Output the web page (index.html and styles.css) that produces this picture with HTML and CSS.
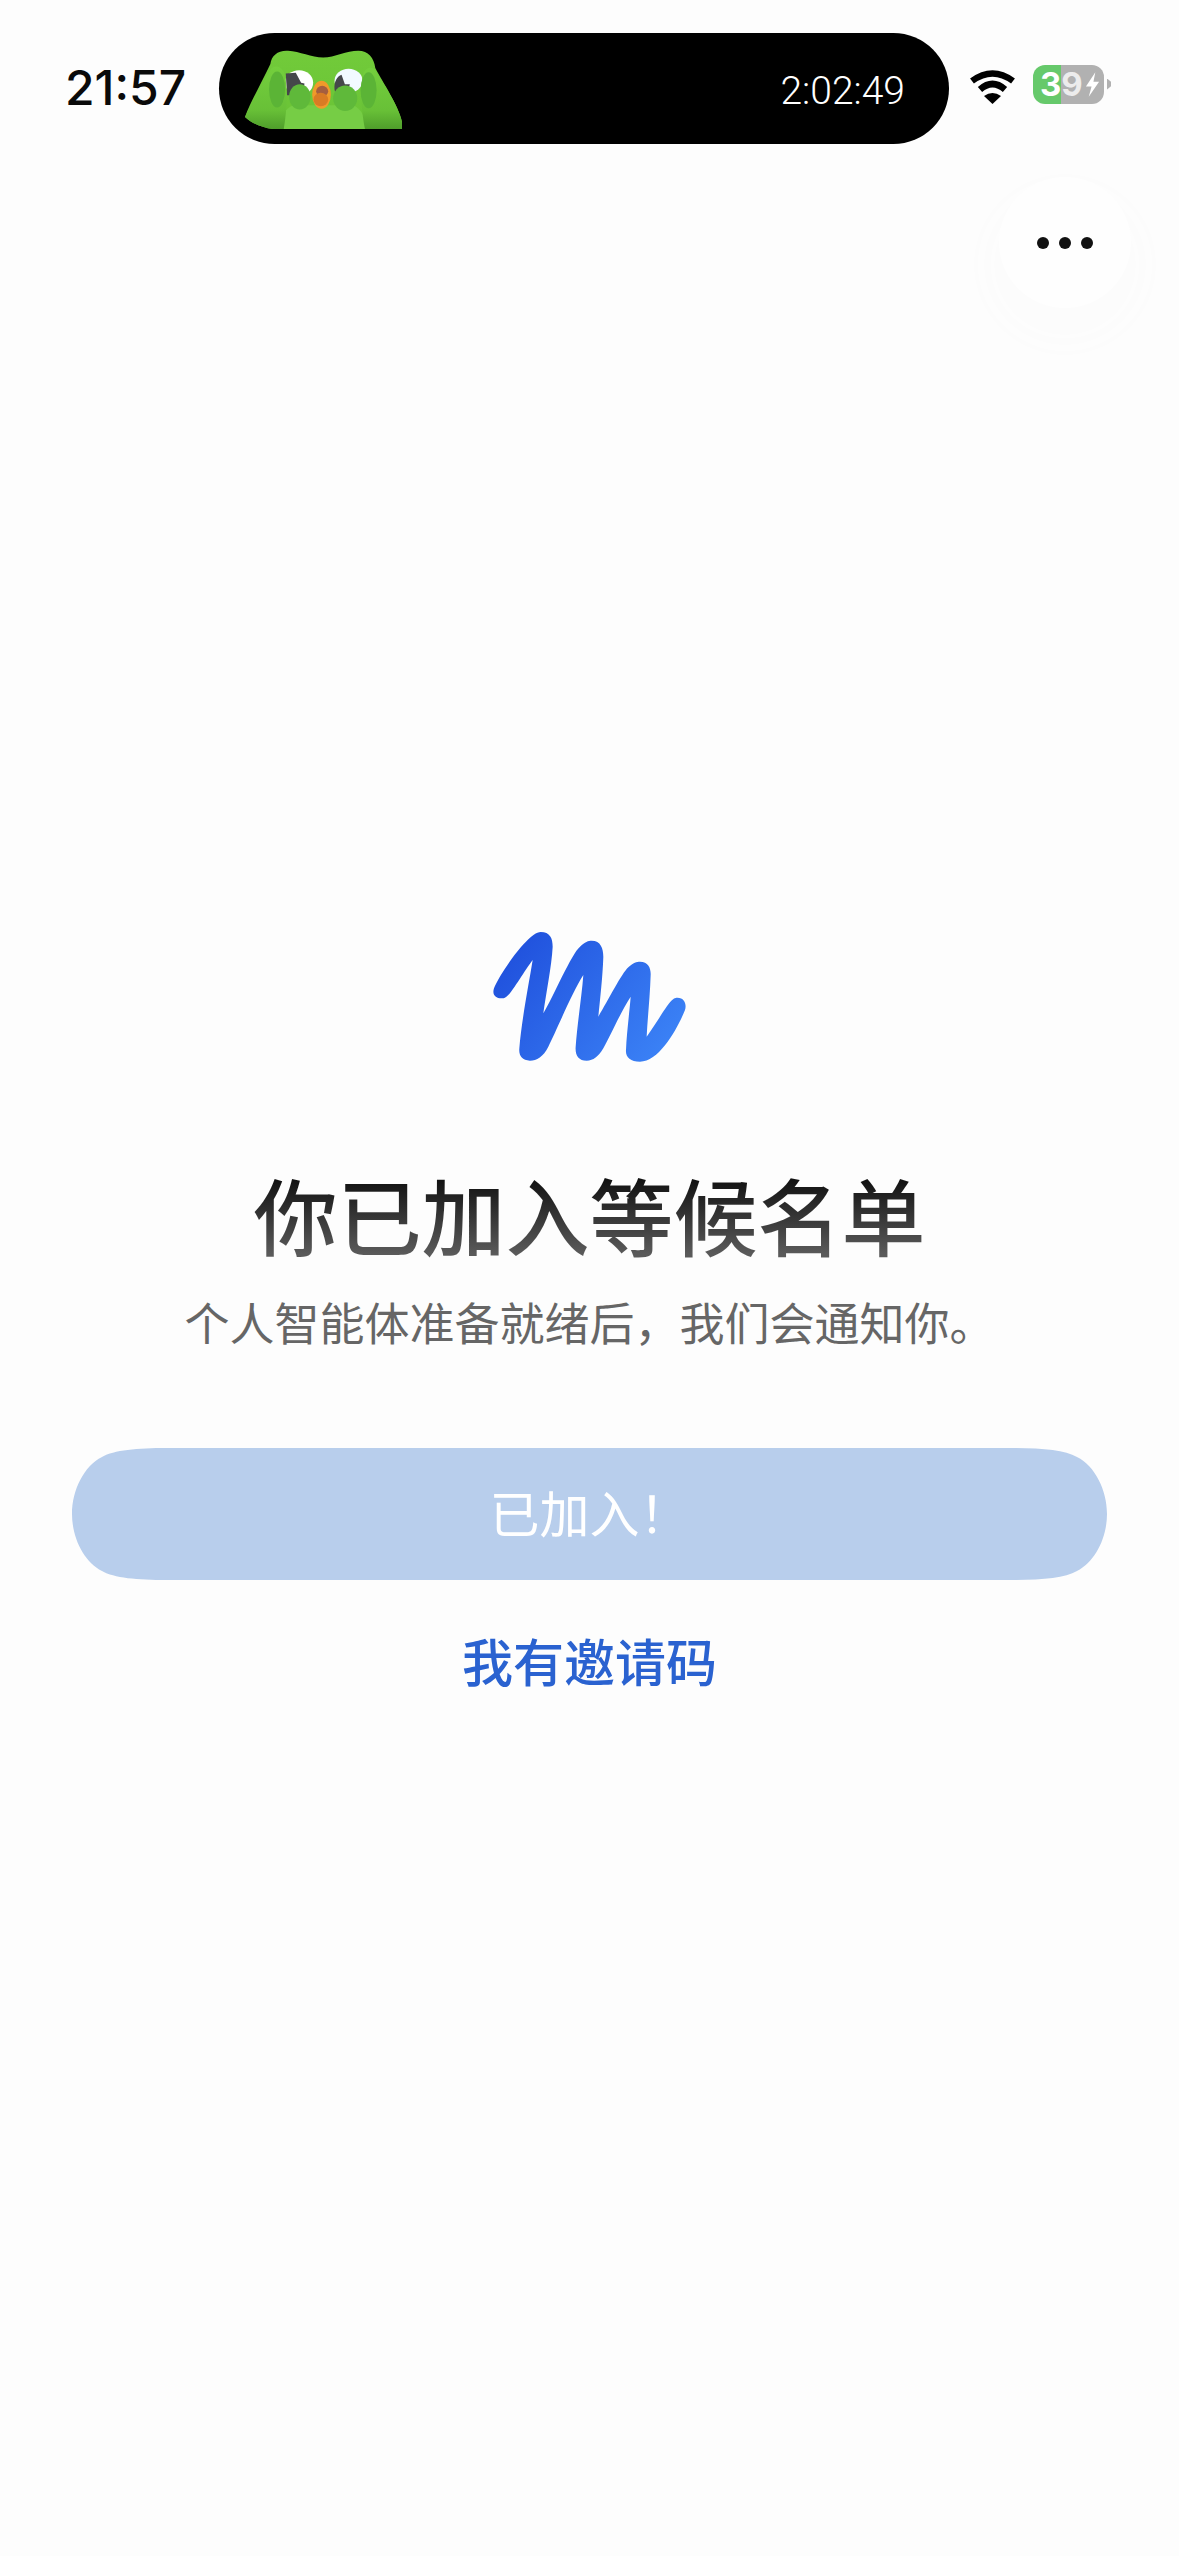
FILE: index.html
```html
<!DOCTYPE html>
<html lang="zh-CN">
<head>
<meta charset="utf-8">
<title>等候名单</title>
<link rel="stylesheet" href="styles.css">
</head>
<body>
<div class="screen">
  <header class="status">
    <span class="clock">21:57</span>
    <div class="island">
      <svg class="owl" viewBox="46 30 470 236" width="157" height="79" aria-hidden="true">
        <defs>
          <linearGradient id="owlBody" x1="0" y1="0" x2="0" y2="1">
            <stop offset="0" stop-color="#72cb3a"/>
            <stop offset="1" stop-color="#69c236"/>
          </linearGradient>
          <linearGradient id="owlWing" x1="0" y1="0" x2="0" y2="1">
            <stop offset="0" stop-color="#74cf3d"/>
            <stop offset=".7" stop-color="#68c037"/>
            <stop offset="1" stop-color="#4f9e2b"/>
          </linearGradient>
        </defs>
        <path d="M122 72C125 46 145 30 175 32C210 34 245 52 280 52C315 52 350 32 385 32C415 32 432 52 436 84C460 130 505 195 516 245V266H130C95 262 65 248 46 230C65 180 95 130 122 72Z" fill="url(#owlBody)"/>
        <path d="M160 266C150 230 165 205 190 195H370C395 205 410 235 405 266Z" fill="#76cd45"/>
        <ellipse cx="208" cy="128" rx="42" ry="38" fill="#fff"/>
        <path d="M168 100L198 98L214 128L224 130L220 165H172Z" fill="#45474a"/>
        <ellipse cx="356" cy="122" rx="42" ry="36" fill="#f2faff"/>
        <path d="M314 148C312 125 322 108 335 104L345 132H360L350 165H318Z" fill="#45474a"/>
        <ellipse cx="210" cy="170" rx="32" ry="38" fill="#5fb93a"/>
        <ellipse cx="346" cy="174" rx="36" ry="38" fill="#5fb93a"/>
        <path d="M46 230C70 180 100 125 125 85C138 72 158 80 166 105C175 160 170 220 162 266H130C95 262 65 248 46 230Z" fill="url(#owlWing)"/>
        <path d="M516 245V266H405C396 220 390 160 398 108C405 80 425 78 436 90C460 130 505 195 516 245Z" fill="url(#owlWing)"/>
        <ellipse cx="142" cy="148" rx="24" ry="54" fill="#5bb436"/>
        <ellipse cx="416" cy="150" rx="24" ry="54" fill="#5bb436"/>
        <ellipse cx="275" cy="164" rx="28" ry="42" fill="#f09a2a"/>
        <ellipse cx="277" cy="153" rx="18" ry="16" fill="#a55e3f"/>
        <ellipse cx="273" cy="178" rx="22" ry="20" fill="#d97b24"/>
      </svg>
      <span class="timer">2:02:49</span>
    </div>
    <svg class="wifi" viewBox="0 0 47 35" width="47" height="35" aria-hidden="true">
      <path d="M3 12Q23.500 -3 44 12" class="wifi-arc"/>
      <path d="M11 20.500Q23.500 9.500 36 20.500" class="wifi-arc"/>
      <path d="M15 27Q23.500 21 32 27L23.500 35Z" class="wifi-dot"/>
    </svg>
    <div class="battery">
      <span class="level-a">3</span><span class="level-b">9</span>
      <svg class="bolt" viewBox="0 0 16 26" width="15" height="25" aria-hidden="true">
        <path d="M11 0L1 15H7L4 26L15 10H9Z" fill="#fff"/>
      </svg>
    </div>
  </header>

  <div class="menu-row">
    <button class="menu" aria-label="更多">
      <i class="dot"></i><i class="dot"></i><i class="dot"></i>
    </button>
  </div>

  <main class="hero">
    <svg class="logo" viewBox="0 0 720 480" width="240" height="160" aria-hidden="true">
      <defs>
        <linearGradient id="logoGrad" gradientUnits="userSpaceOnUse" x1="120" y1="75" x2="585" y2="435">
          <stop offset="0" stop-color="#1f4fdc"/>
          <stop offset="1" stop-color="#3b82f6"/>
        </linearGradient>
      </defs>
      <path fill="url(#logoGrad)" d="M72 235C90 190 175 66 212 66C240 66 248 85 248 110C245 170 228 250 220 310C250 260 305 130 330 110C345 95 355 92 365 92C392 92 400 115 400 140C398 200 390 270 385 320C415 270 455 190 475 172C490 158 500 155 510 155C535 155 543 175 542 195C540 260 533 320 530 380C555 345 585 295 600 277C610 265 615 263 622 263C645 263 650 285 645 300C625 350 570 455 510 455C480 455 466 440 468 420C470 370 478 310 482 260C450 310 420 380 400 415C385 440 370 452 350 452C325 452 315 435 317 410C322 340 335 260 340 195C310 240 260 360 235 410C220 440 200 452 180 452C155 452 146 435 148 415C155 330 175 230 188 150C165 180 130 240 115 255C105 265 100 265 95 265C75 265 66 252 72 235Z"/>
    </svg>
    <h1 class="title">你已加入等候名单</h1>
    <p class="sub">个人智能体准备就绪后，我们会通知你。</p>
    <button class="joined">已加入！</button>
    <a class="invite" href="#">我有邀请码</a>
  </main>
</div>
</body>
</html>
```

FILE: styles.css
```css
* { box-sizing: border-box; }
html, body { margin: 0; padding: 0; }
body {
  background: #fdfdfd;
  font-family: "Noto Sans CJK SC", "Noto Sans", sans-serif;
}
.screen {
  width: 1179px;
  height: 2556px;
  overflow: hidden;
  padding-top: 33px;
}
.status {
  display: flex;
  align-items: center;
  height: 111px;
  padding-left: 65px;
}
.clock {
  width: 154px;
  font-family: Inter, sans-serif;
  font-size: 48px;
  font-weight: 500;
  color: #0a0a0a;
  margin-top: -2px;
}
.island {
  width: 730px;
  height: 111px;
  border-radius: 56px;
  background: #000;
  display: flex;
  align-items: flex-start;
  justify-content: space-between;
  padding: 17px 44px 0 26px;
  flex-shrink: 0;
}
.owl { display: block; }
.timer {
  font-family: Roboto, sans-serif;
  font-weight: 300;
  font-size: 39px;
  line-height: 46px;
  color: #fff;
  margin-top: 18px;
}
.wifi { margin-left: 20px; margin-top: -5px; flex-shrink: 0; }
.wifi-arc { fill: none; stroke: #000; stroke-width: 6.500; }
.wifi-dot { fill: #000; }
.battery {
  position: relative;
  width: 71px;
  height: 39px;
  margin-left: 17px;
  margin-top: -9px;
  border-radius: 12px;
  background: linear-gradient(90deg, #66c96b 39.500%, #b1b1b1 39.500%);
  display: flex;
  align-items: center;
  padding-left: 7px;
  font-family: Inter, sans-serif;
  font-size: 33px;
  font-weight: 700;
  line-height: 39px;
  flex-shrink: 0;
}
.battery::after {
  content: "";
  position: absolute;
  right: -7px;
  top: 14px;
  width: 4px;
  height: 11px;
  background: #b1b1b1;
  clip-path: polygon(0 0, 100% 30%, 100% 70%, 0 100%);
}
.level-a { color: #fff; }
.level-b { color: #ececec; }
.bolt { margin-left: 2px; }

.menu-row {
  display: flex;
  justify-content: flex-end;
  padding: 33px 48px 0 0;
}
.menu {
  width: 132px;
  height: 131px;
  border: 0;
  padding: 0;
  border-radius: 50%;
  background: #fefefe;
  box-shadow: 0 22px 30px 16px #fcfcfc;
  display: flex;
  align-items: center;
  justify-content: center;
  gap: 10px;
}
.dot {
  width: 12px;
  height: 12px;
  border-radius: 50%;
  background: #111;
}

.hero {
  display: flex;
  flex-direction: column;
  align-items: center;
  padding-top: 602px;
}
.logo { display: block; }
.title {
  margin: 94px 0 0;
  font-size: 84px;
  line-height: 100px;
  font-weight: 500;
  background: linear-gradient(180deg, #0c0c0c 10%, #5a5a5a 90%);
  -webkit-background-clip: text;
  background-clip: text;
  color: transparent;
}
.sub {
  margin: 28px 0 0;
  font-size: 45px;
  line-height: 60px;
  font-weight: 400;
  color: #666;
}
.joined {
  margin-top: 96px;
  width: 1035px;
  height: 132px;
  border: 0;
  padding: 0 0 7px;
  clip-path: path("M0 66C0 42 12 18 30 9C42 2 65 0 95 0H940C970 0 993 2 1005 9C1023 18 1035 42 1035 66C1035 90 1023 114 1005 123C993 130 970 132 940 132H95C65 132 42 130 30 123C12 114 0 90 0 66Z");
  background: #b8ceec;
  color: #fff;
  font-family: inherit;
  font-size: 50px;
  font-weight: 400;
}
.invite {
  margin-top: 45px;
  font-size: 51px;
  line-height: 70px;
  font-weight: 500;
  color: #2a62d0;
  text-decoration: none;
}
```
